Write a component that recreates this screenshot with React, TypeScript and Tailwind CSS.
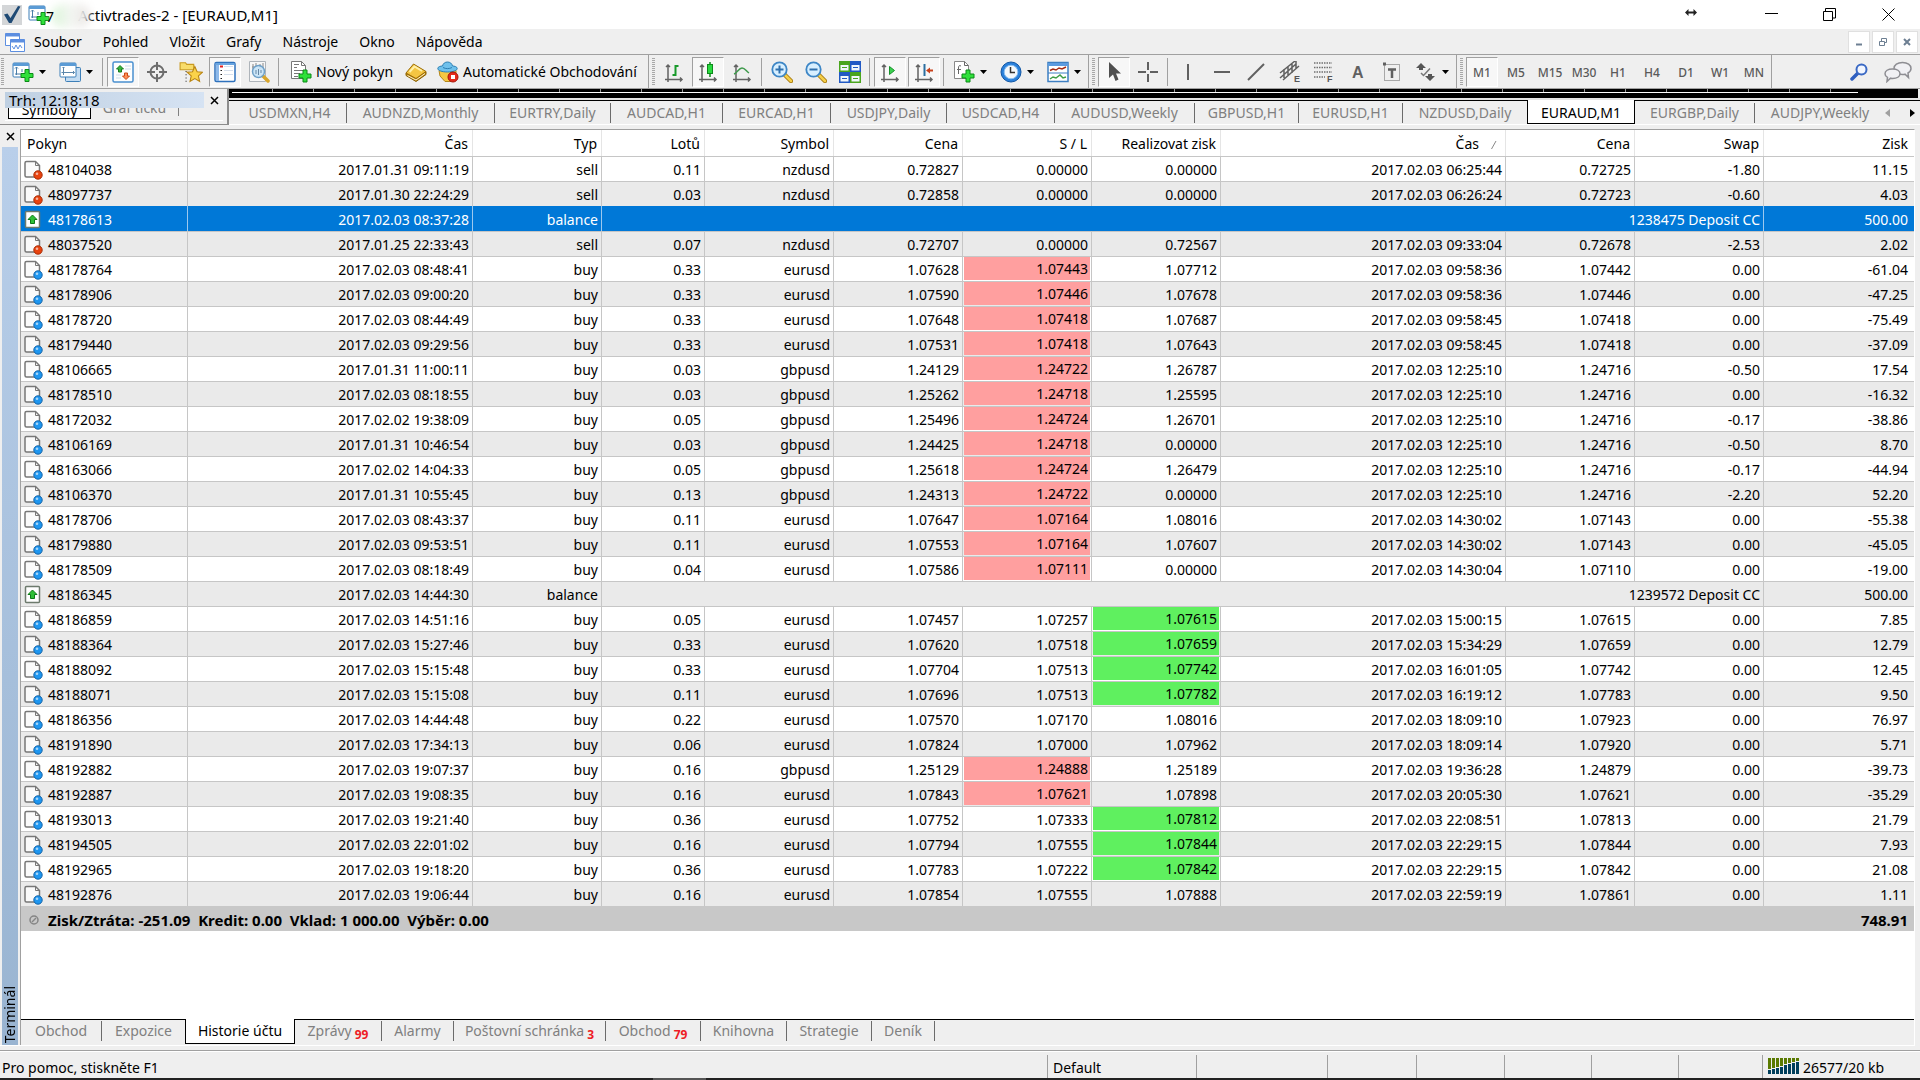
import { Fragment, type ReactNode } from 'react'

type Order = {
  id: string
  open: string
  type: 'buy' | 'sell'
  lots: string
  symbol: string
  price: string
  sl: string
  tp: string
  close: string
  closePrice: string
  swap: string
  profit: string
  hit?: 'sl' | 'tp'
}

type Balance = { id: string; open: string; type: 'balance'; comment: string; profit: string; selected?: boolean }

const order = (line: string, hit?: 'sl' | 'tp'): Order => {
  const [id, open, type, lots, symbol, price, sl, tp, close, closePrice, swap, profit] = line.split('|')
  return { id, open, type: type as 'buy' | 'sell', lots, symbol, price, sl, tp, close, closePrice, swap, profit, hit }
}

const rows: (Order | Balance)[] = [
  order('48104038|2017.01.31 09:11:19|sell|0.11|nzdusd|0.72827|0.00000|0.00000|2017.02.03 06:25:44|0.72725|-1.80|11.15'),
  order('48097737|2017.01.30 22:24:29|sell|0.03|nzdusd|0.72858|0.00000|0.00000|2017.02.03 06:26:24|0.72723|-0.60|4.03'),
  { id: '48178613', open: '2017.02.03 08:37:28', type: 'balance', comment: '1238475 Deposit CC', profit: '500.00', selected: true },
  order('48037520|2017.01.25 22:33:43|sell|0.07|nzdusd|0.72707|0.00000|0.72567|2017.02.03 09:33:04|0.72678|-2.53|2.02'),
  order('48178764|2017.02.03 08:48:41|buy|0.33|eurusd|1.07628|1.07443|1.07712|2017.02.03 09:58:36|1.07442|0.00|-61.04', 'sl'),
  order('48178906|2017.02.03 09:00:20|buy|0.33|eurusd|1.07590|1.07446|1.07678|2017.02.03 09:58:36|1.07446|0.00|-47.25', 'sl'),
  order('48178720|2017.02.03 08:44:49|buy|0.33|eurusd|1.07648|1.07418|1.07687|2017.02.03 09:58:45|1.07418|0.00|-75.49', 'sl'),
  order('48179440|2017.02.03 09:29:56|buy|0.33|eurusd|1.07531|1.07418|1.07643|2017.02.03 09:58:45|1.07418|0.00|-37.09', 'sl'),
  order('48106665|2017.01.31 11:00:11|buy|0.03|gbpusd|1.24129|1.24722|1.26787|2017.02.03 12:25:10|1.24716|-0.50|17.54', 'sl'),
  order('48178510|2017.02.03 08:18:55|buy|0.03|gbpusd|1.25262|1.24718|1.25595|2017.02.03 12:25:10|1.24716|0.00|-16.32', 'sl'),
  order('48172032|2017.02.02 19:38:09|buy|0.05|gbpusd|1.25496|1.24724|1.26701|2017.02.03 12:25:10|1.24716|-0.17|-38.86', 'sl'),
  order('48106169|2017.01.31 10:46:54|buy|0.03|gbpusd|1.24425|1.24718|0.00000|2017.02.03 12:25:10|1.24716|-0.50|8.70', 'sl'),
  order('48163066|2017.02.02 14:04:33|buy|0.05|gbpusd|1.25618|1.24724|1.26479|2017.02.03 12:25:10|1.24716|-0.17|-44.94', 'sl'),
  order('48106370|2017.01.31 10:55:45|buy|0.13|gbpusd|1.24313|1.24722|0.00000|2017.02.03 12:25:10|1.24716|-2.20|52.20', 'sl'),
  order('48178706|2017.02.03 08:43:37|buy|0.11|eurusd|1.07647|1.07164|1.08016|2017.02.03 14:30:02|1.07143|0.00|-55.38', 'sl'),
  order('48179880|2017.02.03 09:53:51|buy|0.11|eurusd|1.07553|1.07164|1.07607|2017.02.03 14:30:02|1.07143|0.00|-45.05', 'sl'),
  order('48178509|2017.02.03 08:18:49|buy|0.04|eurusd|1.07586|1.07111|0.00000|2017.02.03 14:30:04|1.07110|0.00|-19.00', 'sl'),
  { id: '48186345', open: '2017.02.03 14:44:30', type: 'balance', comment: '1239572 Deposit CC', profit: '500.00' },
  order('48186859|2017.02.03 14:51:16|buy|0.05|eurusd|1.07457|1.07257|1.07615|2017.02.03 15:00:15|1.07615|0.00|7.85', 'tp'),
  order('48188364|2017.02.03 15:27:46|buy|0.33|eurusd|1.07620|1.07518|1.07659|2017.02.03 15:34:29|1.07659|0.00|12.79', 'tp'),
  order('48188092|2017.02.03 15:15:48|buy|0.33|eurusd|1.07704|1.07513|1.07742|2017.02.03 16:01:05|1.07742|0.00|12.45', 'tp'),
  order('48188071|2017.02.03 15:15:08|buy|0.11|eurusd|1.07696|1.07513|1.07782|2017.02.03 16:19:12|1.07783|0.00|9.50', 'tp'),
  order('48186356|2017.02.03 14:44:48|buy|0.22|eurusd|1.07570|1.07170|1.08016|2017.02.03 18:09:10|1.07923|0.00|76.97'),
  order('48191890|2017.02.03 17:34:13|buy|0.06|eurusd|1.07824|1.07000|1.07962|2017.02.03 18:09:14|1.07920|0.00|5.71'),
  order('48192882|2017.02.03 19:07:37|buy|0.16|gbpusd|1.25129|1.24888|1.25189|2017.02.03 19:36:28|1.24879|0.00|-39.73', 'sl'),
  order('48192887|2017.02.03 19:08:35|buy|0.16|eurusd|1.07843|1.07621|1.07898|2017.02.03 20:05:30|1.07621|0.00|-35.29', 'sl'),
  order('48193013|2017.02.03 19:21:40|buy|0.36|eurusd|1.07752|1.07333|1.07812|2017.02.03 22:08:51|1.07813|0.00|21.79', 'tp'),
  order('48194505|2017.02.03 22:01:02|buy|0.16|eurusd|1.07794|1.07555|1.07844|2017.02.03 22:29:15|1.07844|0.00|7.93', 'tp'),
  order('48192965|2017.02.03 19:18:20|buy|0.36|eurusd|1.07783|1.07222|1.07842|2017.02.03 22:29:15|1.07842|0.00|21.08', 'tp'),
  order('48192876|2017.02.03 19:06:44|buy|0.16|eurusd|1.07854|1.07555|1.07888|2017.02.03 22:59:19|1.07861|0.00|1.11'),
]

const columns = ['Pokyn', 'Čas', 'Typ', 'Lotů', 'Symbol', 'Cena', 'S / L', 'Realizovat zisk', 'Čas', 'Cena', 'Swap', 'Zisk']

const menu = ['Soubor', 'Pohled', 'Vložit', 'Grafy', 'Nástroje', 'Okno', 'Nápověda']

const chartTabs = [
  { name: 'USDMXN,H4', width: 'w-[118px] pl-1' },
  { name: 'AUDNZD,Monthly', width: 'w-[148px]' },
  { name: 'EURTRY,Daily', width: 'w-[116px]' },
  { name: 'AUDCAD,H1', width: 'w-[112px]' },
  { name: 'EURCAD,H1', width: 'w-[108px]' },
  { name: 'USDJPY,Daily', width: 'w-[116px]' },
  { name: 'USDCAD,H4', width: 'w-[108px]' },
  { name: 'AUDUSD,Weekly', width: 'w-[140px]' },
  { name: 'GBPUSD,H1', width: 'w-[104px]' },
  { name: 'EURUSD,H1', width: 'w-[104px]' },
  { name: 'NZDUSD,Daily', width: 'w-[124px]' },
  { name: 'EURAUD,M1', width: 'w-[108px]', active: true },
  { name: 'EURGBP,Daily', width: 'w-[120px]' },
  { name: 'AUDJPY,Weekly', width: 'w-[130px]', last: true },
]

const terminalTabs = [
  { name: 'Obchod', width: 'w-[81px]' },
  { name: 'Expozice', width: 'w-[83px]', last: true },
  { name: 'Historie účtu', width: 'w-[110px]', active: true },
  { name: 'Zprávy', width: 'w-[87px]', count: 99 },
  { name: 'Alarmy', width: 'w-[72px]' },
  { name: 'Poštovní schránka', width: 'w-[152px]', count: 3 },
  { name: 'Obchod', width: 'w-[95px]', count: 79 },
  { name: 'Knihovna', width: 'w-[86px]' },
  { name: 'Strategie', width: 'w-[85px]' },
  { name: 'Deník', width: 'w-[63px]' },
]

const timeframes = ['M1', 'M5', 'M15', 'M30', 'H1', 'H4', 'D1', 'W1', 'MN']

function Icon({ children, size = 22 }: { children: ReactNode; size?: number }) {
  return (
    <svg width={size} height={size} viewBox="0 0 22 22" fill="none" className="shrink-0">
      {children}
    </svg>
  )
}

const Plus = ({ x, y }: { x: number; y: number }) => (
  <path
    transform={`translate(${x} ${y})`}
    d="M4.5.5h4v4h4v4h-4v4h-4v-4h-4v-4h4z"
    fill="#2fe03a"
    stroke="#0b8a17"
  />
)

const NewChart = () => (
  <Icon>
    <rect x="1" y="2" width="16" height="14" rx="1" fill="#fff" stroke="#3d7fb8" />
    <path d="M1 3.500h16" stroke="#5b9bd5" strokeWidth="3" />
    <path d="M4.500 6v8M3 7.500l1.500-1.500L6 7.500M3 13h9M10 8v3" stroke="#4b7ea8" />
    <Plus x={8.5} y={8} />
  </Icon>
)

const Profiles = () => (
  <Icon>
    <rect x="6.500" y="6.500" width="15" height="14" rx="1" fill="#c3dcf2" stroke="#3d7fb8" />
    <rect x="1" y="2" width="16" height="14" rx="1" fill="#fff" stroke="#3d7fb8" />
    <path d="M1 3.500h16" stroke="#5b9bd5" strokeWidth="3" />
    <path d="M4.500 6v8M3.500 7l1-1 1 1M2.500 11.500h13M14 10l1.500 1.500L14 13" stroke="#5c87ab" />
  </Icon>
)

const MarketWatch = () => (
  <Icon>
    <rect x="1" y="1" width="20" height="20" rx="1.500" fill="#fdfefe" stroke="#4a90d0" strokeWidth="1.500" />
    <path d="M4 14h5M4 17h5M13 5h6M13 8h6" stroke="#cddcea" />
    <path d="M8 4.500l3.500 3.500h-2v3h-3V8h-2z" fill="#35b63c" stroke="#177a1e" />
    <path d="M14 18.500l-3.500-3.500h2v-3h3v3h2z" fill="#ff8d55" stroke="#cc4a16" />
  </Icon>
)

const Target = () => (
  <Icon>
    <circle cx="11" cy="11" r="6.500" stroke="#6d6d6d" strokeWidth="2" />
    <path d="M11 1v8M11 13v8M1 11h8M13 11h8" stroke="#6d6d6d" strokeWidth="2" />
  </Icon>
)

const Favorites = () => (
  <Icon size={24}>
    <path d="M1 9V2.500h5l1 1.500h6.500V9z" fill="#f8dc6a" stroke="#c99a20" />
    <path d="M6.500 10v10" stroke="#333" strokeDasharray="1 2" />
    <path
      d="M14.500 6l2.100 4.700 5 .5-3.800 3.400 1.100 5-4.400-2.600-4.400 2.600 1.100-5-3.800-3.400 5-.5z"
      fill="#fbd34a"
      stroke="#b98514"
    />
  </Icon>
)

const Navigator = () => (
  <Icon>
    <rect x="1" y="1.500" width="20" height="19" rx="1.500" fill="#fff" stroke="#2f72bd" strokeWidth="1.500" />
    <path d="M1.500 3h19" stroke="#69a5e0" strokeWidth="2" />
    <rect x="2" y="4" width="3" height="16" fill="#8db9ea" />
    <path d="M6 5.500h3" stroke="#e02020" strokeWidth="2" />
    <path d="M6.500 9.500h1.500M6.500 13.500h1.500M6.500 17.500h1.500" stroke="#222" />
    <path d="M10 5.500h9M10 9.500h9M10 13.500h9" stroke="#d5dfec" />
  </Icon>
)

const Tester = () => (
  <Icon>
    <path d="M1.500.500h16v20h-16z" fill="#f7f7f7" stroke="#aeb4ba" />
    <path d="M5 3v5M8 2v4M12 3v5M15 2v5M4 6h2M11 5h2" stroke="#888" />
    <path d="M15 15l5 5" stroke="#d9a62c" strokeWidth="3.500" strokeLinecap="round" />
    <circle cx="10.500" cy="10.500" r="6" fill="#c7e3f7" fillOpacity=".9" stroke="#6ea0c8" strokeWidth="1.500" />
    <path d="M8 13V9M10.500 14V8M13 12v-3" stroke="#6687a5" />
  </Icon>
)

const NewOrder = () => (
  <Icon>
    <path d="M1.500.500h10l4 4v13h-14z" fill="#fff" stroke="#777" />
    <path d="M11.500.500v4h4M4 3.500h5M4 6.500h3M4 9.500h9M4 12.500h6M4 15.500h4" stroke="#777" />
    <Plus x={8.5} y={8.5} />
  </Icon>
)

const Book = () => (
  <Icon>
    <path d="M1 12v2.500l10 6 10-7v-3L11 17z" fill="#b98510" stroke="#8a6000" />
    <path d="M1 12L8.500 3 21 10.500 11 17.500z" fill="#f4c542" stroke="#9b6c06" />
    <path d="M4.500 11l5-5.500 7.500 4.500" stroke="#fff0a8" strokeWidth="2" />
    <path d="M2.500 14.500l8.500 4.500 9-6.500" stroke="#fff3cf" />
  </Icon>
)

const AutoTrade = () => (
  <Icon>
    <path d="M2 9.500h17v4.500l-5 6.500H8L3 15z" fill="#f5c842" stroke="#b4861a" />
    <path d="M.8 7.500C.8 5.500 4 5 5.500 5 6 2.500 8 1 10.500 1s4.500 1.500 5 4c1.500 0 4.700.5 4.700 2.500S16 11 10.500 11 .8 9.500.8 7.500z" fill="#6fc1ec" stroke="#2d7fb3" />
    <path d="M6 6.500c3 1.500 6 1.500 9 0" stroke="#2d7fb3" />
    <circle cx="16" cy="16" r="5" fill="#e42a1b" stroke="#a71308" />
    <rect x="14" y="14" width="4" height="4" fill="#fff" />
  </Icon>
)

const Axes = ({ children }: { children: ReactNode }) => (
  <Icon>
    <path d="M5 21V4M3 6l2-2 2 2M2 18.500h17M17 16.500l2 2-2 2" stroke="#636363" strokeWidth="1.500" />
    {children}
  </Icon>
)

const BarChart = () => (
  <Axes>
    <path d="M9.500 14h3M12.500 15V4M12.500 5h3" stroke="#189a2b" strokeWidth="2" />
  </Axes>
)

const CandleChart = () => (
  <Axes>
    <path d="M13 1v15" stroke="#0d8a1b" strokeWidth="1.500" />
    <rect x="10.500" y="3.500" width="5" height="9" fill="#2adb40" stroke="#0d8a1b" />
  </Axes>
)

const LineChart = () => (
  <Axes>
    <path d="M3 13c3-1 5-6 8-6s4 3 7 5" stroke="#3f9a4c" strokeWidth="1.500" />
  </Axes>
)

const AutoScroll = () => (
  <Axes>
    <path d="M10.500 5.500v8l5-4z" fill="#3bd04e" stroke="#15912a" />
  </Axes>
)

const ChartShift = () => (
  <Axes>
    <path d="M11.500 3v12" stroke="#2c6fa0" strokeWidth="2" />
    <path d="M13 9.500l4-3v2h3v2h-3v2z" fill="#c8401b" />
  </Axes>
)

const Zoom = ({ plus }: { plus?: boolean }) => (
  <Icon>
    <path d="M14 14l6 6" stroke="#a97c12" strokeWidth="4.500" strokeLinecap="round" />
    <path d="M14 14l6 6" stroke="#f5cf48" strokeWidth="2.500" strokeLinecap="round" />
    <circle cx="8.500" cy="8.500" r="7.200" fill="#d7efff" stroke="#3d86c6" strokeWidth="1.800" />
    <path d={plus ? 'M4.500 8.500h8M8.500 4.500v8' : 'M4.500 8.500h8'} stroke="#2f70ae" strokeWidth="2" />
  </Icon>
)

const Tiles = () => (
  <Icon>
    {[
      [0, 0, '#4aa51d'],
      [11, 0, '#2159c4'],
      [0, 11, '#2159c4'],
      [11, 11, '#4aa51d'],
    ].map(([x, y, color]) => (
      <g key={`${x}-${y}`} transform={`translate(${x} ${y})`}>
        <rect width="11" height="11" fill={color as string} />
        <rect x="1.500" y="4" width="8" height="5.500" fill="#f1f7fb" />
        <path d="M3 6.500h5" stroke={color as string} />
      </g>
    ))}
  </Icon>
)

const Indicators = () => (
  <Icon>
    <path d="M1.500.500h10l4 4v13h-14z" fill="#fff" stroke="#888" />
    <path d="M11.500.500v4h4M8 5c-2-1-2.500 0-2.500 2v6M4 8.500h4" stroke="#666" />
    <Plus x={8.5} y={8.5} />
  </Icon>
)

const Clock = () => (
  <Icon>
    <circle cx="11" cy="11" r="10" fill="#2a80da" stroke="#1257a5" />
    <circle cx="11" cy="11" r="6.800" fill="#f4f8fb" stroke="#8ec2f3" />
    <path d="M10.500 6v5.500H15" stroke="#333" strokeWidth="1.500" />
  </Icon>
)

const Template = () => (
  <Icon>
    <rect x="1" y="1.500" width="20" height="19" fill="#fff" stroke="#3d7fc2" strokeWidth="1.500" />
    <path d="M1 3.500h20" stroke="#5b9be0" strokeWidth="3" />
    <path d="M1 12h20" stroke="#3d7fc2" />
    <path d="M3 9.500l3-1.500 3 1 3-2 3 1 4-2" stroke="#a42a14" strokeWidth="1.500" />
    <path d="M3 18l3-2 3 1 4-3 3 3 3-1" stroke="#3e9c46" strokeWidth="1.500" />
  </Icon>
)

const Cursor = () => (
  <Icon>
    <path d="M6 1v16l4-3.500 2.500 6.500 3-1.500-2.500-6h5z" fill="#4f4f4f" />
  </Icon>
)

const Stroke = ({ d }: { d: string }) => (
  <Icon>
    <path d={d} stroke="#606060" strokeWidth="2" />
  </Icon>
)

const letter = 'font-bold font-["Liberation_Sans",sans-serif]'

const Channel = () => (
  <Icon>
    <path d="M1 17L17 3M4 19L20 5M1 12L16 0M5 8v9M9 5v9M13 3v9M17 0v8" stroke="#606060" strokeWidth="1.500" />
    <rect x="14" y="13" width="8" height="9" fill="#efefef" />
    <text x="15" y="21" fontSize="9" fill="#555" className={letter}>E</text>
  </Icon>
)

const Fibo = () => (
  <Icon>
    <path d="M1 2h18M1 6.500h18M1 11h18M1 16h11" stroke="#707070" strokeWidth="1.500" strokeDasharray="1.500 1" />
    <text x="14" y="21" fontSize="9" fill="#555" className={letter}>F</text>
  </Icon>
)

const LetterA = () => (
  <Icon>
    <text x="5" y="17" fontSize="16" fill="#606060" className={letter}>A</text>
  </Icon>
)

const Label = () => (
  <Icon>
    <rect x="3.500" y="3.500" width="15" height="16" stroke="#606060" strokeDasharray="1 1" />
    <path d="M2 3h3" stroke="#606060" strokeWidth="3" />
    <path d="M7 8.500h8M11 8v9" stroke="#606060" strokeWidth="2.500" />
  </Icon>
)

const Arrows = () => (
  <Icon>
    <path d="M6 2l5 5H8v2H4V7H1zM15 20l5-5h-3v-2h-4v2h-3z" fill="#555" />
    <path d="M6 12l2.500 2.500L15 7.500" stroke="#777" strokeWidth="1.500" />
  </Icon>
)

function Grip() {
  return <div className="mr-0.5 h-7 w-[3px] bg-[repeating-linear-gradient(#a8a8a8_0_1px,#efefef_1px_2px)]" />
}

function Separator() {
  return <div className="mr-[3px] ml-0.5 h-7 w-px bg-[#a0a0a0]" />
}

function ToolButton({ label, pressed, children }: { label: string; pressed?: boolean; children: ReactNode }) {
  return (
    <button
      type="button"
      aria-label={label}
      aria-pressed={pressed}
      className={`mx-px flex h-[30px] w-8 items-center justify-center border ${
        pressed ? 'border-t-[#a0a0a0] border-l-[#a0a0a0] border-r-white border-b-white bg-[#f7f7f7]' : 'border-transparent'
      }`}
    >
      {children}
    </button>
  )
}

function DropButton({ label, children }: { label: string; children: ReactNode }) {
  return (
    <button type="button" aria-label={label} className="flex h-[30px] w-[47px] items-center gap-[5px] pl-1.5">
      {children}
      <svg width="7" height="4" viewBox="0 0 7 4">
        <path d="M0 0h7L3.500 4z" fill="#000" />
      </svg>
    </button>
  )
}

function Group({ children, first }: { children: ReactNode; first?: boolean }) {
  return <div className={`flex h-full items-center border-r border-[#a0a0a0] ${first ? 'pl-px' : 'pl-[3px]'}`}>{children}</div>
}

function TitleBar() {
  return (
    <header className="flex h-[29px] items-center bg-white pl-0.5">
      <svg width="20" height="20" viewBox="0 0 20 20">
        <rect width="20" height="20" fill="#d4d6d8" />
        <path d="M2 9.500l3.500-1 3 4.500L16 1l2.500.5L9.500 18H7z" fill="#1f4a75" />
      </svg>
      <div className="relative ml-1.5 flex h-full items-center">
        <NewChart />
        <h1 className="pl-7 text-[15px] leading-5 whitespace-pre">Activtrades-2 - [EURAUD,M1]</h1>
        <span className="absolute top-1 left-6 h-6 w-[38px] rounded-full bg-linear-to-r from-[#d9f5d6] via-[#f4f6f3] to-[#e9e4e2] blur-xs" />
        <span className="absolute top-[7px] left-[18px] text-sm leading-5">7</span>
      </div>
      <svg width="12" height="7" viewBox="0 0 12 7" className="mr-[68px] mb-1 ml-auto">
        <path d="M0 3.500L3.500 0v2.500h5V0L12 3.500 8.500 7V4.500h-5V7z" fill="#222" />
      </svg>
      <button type="button" aria-label="Minimalizovat" className="flex h-full w-[58px] items-center pb-0.5">
        <svg width="13" height="13" viewBox="0 0 13 13">
          <path d="M0 6.500h13" stroke="#000" />
        </svg>
      </button>
      <button type="button" aria-label="Obnovit" className="flex h-full w-[59px] items-center">
        <svg width="13" height="13" viewBox="0 0 13 13" fill="none" stroke="#000">
          <path d="M.5 3.500h9v9h-9zM2.500 3.500v-3h10v9.500h-3" />
        </svg>
      </button>
      <button type="button" aria-label="Zavřít" className="flex h-full w-[38px] items-center">
        <svg width="13" height="13" viewBox="0 0 13 13" stroke="#000">
          <path d="M.5.5l12 12M12.500.5l-12 12" />
        </svg>
      </button>
    </header>
  )
}

function MenuBar() {
  return (
    <nav className="flex h-[25px] items-center pl-[5px]">
      <svg width="20" height="20" viewBox="0 0 20 20" fill="#fff" stroke="#5c8ee0">
        <path d="M.5 1.500h14v12H.5z" />
        <path d="M.5 3h14" strokeWidth="3" />
        <path d="M5.500 7.500h14v12h-14z" />
        <path d="M5.500 9h14" strokeWidth="3" />
        <path d="M7 14l2 3 2-4 2 4 2-4 2 3" fill="none" />
      </svg>
      <div className="flex gap-[21px] pl-[9px]">
        {menu.map((item) => (
          <button key={item} type="button" className="leading-5">
            {item}
          </button>
        ))}
      </div>
      <div className="mr-0.5 ml-auto flex gap-0.5">
        {['M3 8.500h6', 'M2.500 5.500h5v4h-5zM4.500 5V2.500h5v4H8', 'M3 3l6 6M9 3l-6 6'].map((d, i) => (
          <button
            key={d}
            type="button"
            aria-label={['Minimalizovat graf', 'Obnovit graf', 'Zavřít graf'][i]}
            className="flex size-[22px] items-center justify-center border border-[#e0e0e0] bg-white"
          >
            <svg width="12" height="12" viewBox="0 0 12 12" fill="none" stroke="#6d7f92" strokeWidth={i === 1 ? 1 : 2}>
              <path d={d} />
            </svg>
          </button>
        ))}
      </div>
    </nav>
  )
}

function Toolbar() {
  return (
    <div className="flex h-[35px] items-center border-y border-[#a0a0a0]">
      <Group first>
        <Grip />
        <DropButton label="Nový graf"><NewChart /></DropButton>
        <DropButton label="Profily"><Profiles /></DropButton>
        <Separator />
        <ToolButton label="Tržní hlídka" pressed><MarketWatch /></ToolButton>
        <ToolButton label="Datové okno"><Target /></ToolButton>
        <ToolButton label="Oblíbené"><Favorites /></ToolButton>
        <ToolButton label="Terminál" pressed><Navigator /></ToolButton>
        <ToolButton label="Tester strategií"><Tester /></ToolButton>
        <Separator />
        <button type="button" className="flex h-[30px] w-[117px] items-center gap-1 pl-2 whitespace-nowrap">
          <NewOrder />
          Nový pokyn
        </button>
        <ToolButton label="MetaEditor"><Book /></ToolButton>
        <button type="button" className="flex h-[30px] w-[215px] items-center gap-1 pl-1 whitespace-nowrap">
          <AutoTrade />
          Automatické Obchodování
        </button>
      </Group>
      <Group>
        <Grip />
        <ToolButton label="Sloupcový graf"><BarChart /></ToolButton>
        <ToolButton label="Svíčky" pressed><CandleChart /></ToolButton>
        <ToolButton label="Čárový graf"><LineChart /></ToolButton>
        <Separator />
        <ToolButton label="Přiblížit"><Zoom plus /></ToolButton>
        <ToolButton label="Oddálit"><Zoom /></ToolButton>
        <ToolButton label="Uspořádat okna"><Tiles /></ToolButton>
        <Separator />
        <ToolButton label="Automatický posun" pressed><AutoScroll /></ToolButton>
        <ToolButton label="Posun grafu" pressed><ChartShift /></ToolButton>
        <Separator />
        <DropButton label="Indikátory"><Indicators /></DropButton>
        <DropButton label="Periody"><Clock /></DropButton>
        <DropButton label="Šablony"><Template /></DropButton>
      </Group>
      <Group>
        <Grip />
        <ToolButton label="Kurzor" pressed><Cursor /></ToolButton>
        <ToolButton label="Nitkový kříž"><Stroke d="M11 1v8M11 13v8M1 11h8M13 11h8" /></ToolButton>
        <Separator />
        <ToolButton label="Svislá čára"><Stroke d="M11 3v16" /></ToolButton>
        <ToolButton label="Vodorovná čára"><Stroke d="M3 11h16" /></ToolButton>
        <ToolButton label="Trendová čára"><Stroke d="M3 19L19 3" /></ToolButton>
        <ToolButton label="Kanál"><Channel /></ToolButton>
        <ToolButton label="Fibonacci"><Fibo /></ToolButton>
        <ToolButton label="Text"><LetterA /></ToolButton>
        <ToolButton label="Popisek"><Label /></ToolButton>
        <DropButton label="Šipky"><Arrows /></DropButton>
      </Group>
      <Group>
        <Grip />
        {timeframes.map((tf) => (
          <ToolButton key={tf} label={tf} pressed={tf === 'M1'}>
            <span className="pt-0.5 text-xs font-medium text-[#5a5a5a]">{tf}</span>
          </ToolButton>
        ))}
      </Group>
      <div className="mr-2 ml-auto flex items-center gap-4">
        <button type="button" aria-label="Hledat">
          <svg width="18" height="18" viewBox="0 0 18 18" fill="none">
            <path d="M8 10l-6 6" stroke="#2f5fc0" strokeWidth="3.500" strokeLinecap="round" />
            <circle cx="11.500" cy="6.500" r="5" fill="#f2f6ff" stroke="#3a69c4" strokeWidth="2" />
          </svg>
        </button>
        <button type="button" aria-label="Zprávy komunity">
          <svg width="28" height="22" viewBox="0 0 28 22" fill="#f1f1f4" stroke="#8e8e93" strokeWidth="1.500">
            <path d="M18.500 1.500c-5 0-8.500 2.500-8.500 6s3.500 6 8.500 6c1 0 1.500 0 2.500-.3l3.500 3.300-.5-4.500c2-1.200 3-2.700 3-4.500 0-3.500-3.500-6-8.500-6z" />
            <path d="M8.500 8C4 8 1 10 1 12.700c0 1.500 1 2.800 2.500 3.600L3 20.500l3.500-3.300c.6.2 1.300.2 2 .2 4.500 0 7.500-2 7.500-4.700S13 8 8.500 8z" />
          </svg>
        </button>
      </div>
    </div>
  )
}

function MarketPanel() {
  return (
    <section className="flex w-[229px] shrink-0 flex-col border-r-2 border-b border-[#8c8c8c] pt-[3px] pl-[5px]">
      <div className="flex h-4 items-center">
        <h2 className="w-[199px] bg-linear-to-r from-[#bfd0e2] to-[#d6e3f3] pl-1 text-[15px] leading-4">Trh: 12:18:18</h2>
        <button type="button" aria-label="Zavřít Trh" className="pl-1.5">
          <CloseGlyph />
        </button>
      </div>
      <div className="mr-1 flex h-[13px] items-start overflow-hidden border-b border-white text-[#808080]">
        <button type="button" className="-mt-2 ml-[3px] h-[19px] w-[83px] border border-black bg-white leading-4 text-black">Symboly</button>
        <button type="button" className="-mt-2 w-[88px] border-r border-[#808080] leading-4">Graf ticků</button>
      </div>
    </section>
  )
}

function CloseGlyph() {
  return (
    <svg width="9" height="9" viewBox="0 0 9 9" stroke="#000" strokeWidth="1.500">
      <path d="M1 1l7 7M8 1L1 8" />
    </svg>
  )
}

function ChartTabs() {
  return (
    <div className="flex min-w-0 flex-1 flex-col">
      <div className="mr-0.5 h-[9px] bg-black">
        <div className="mr-[60px] ml-[3px] h-1 border-b border-white bg-[repeating-linear-gradient(to_right,#000_0_40px,#999_40px_41px)]" />
      </div>
      <div className="h-0.5 bg-[#e6e6e6]" />
      <div className="flex h-[25px] overflow-hidden border-b border-white text-[#808080]">
        {chartTabs.map((tab) =>
          tab.active ? (
            <button key={tab.name} type="button" className={`${tab.width} h-6 shrink-0 border border-t-0 border-black bg-white pt-0.5 text-black`}>
              {tab.name}
            </button>
          ) : (
            <div key={tab.name} className={`${tab.width} flex shrink-0 items-center border-t border-black`}>
              <button
                type="button"
                className={`h-5 w-full text-center leading-5 ${tab.last || tab.name === 'NZDUSD,Daily' ? '' : 'border-r border-[#6b6b6b]'}`}
              >
                {tab.name}
              </button>
            </div>
          ),
        )}
        <div className="flex flex-1 items-center justify-end gap-5 border-t border-black pr-3">
          <svg width="5" height="8" viewBox="0 0 5 8">
            <path d="M5 0v8L0 4z" fill="#a0a0a0" />
          </svg>
          <svg width="5" height="8" viewBox="0 0 5 8">
            <path d="M0 0v8l5-4z" fill="#000" />
          </svg>
        </div>
      </div>
    </div>
  )
}

function OrderIcon({ type }: { type: 'buy' | 'sell' | 'balance' }) {
  if (type === 'balance') {
    return (
      <svg width="20" height="20" viewBox="0 0 20 20" className="shrink-0">
        <rect x="1.500" y="1.500" width="14" height="16" rx="1" fill="#fff" stroke="#6d7a6d" strokeWidth="1.500" />
        <path d="M8.500 5l4.500 4.500h-2.500v4h-4v-4H4z" fill="#2fbf36" stroke="#0d7a17" />
      </svg>
    )
  }
  return (
    <svg width="20" height="20" viewBox="0 0 20 20" className="shrink-0">
      <path d="M1 3Q1 1.500 2.500 1.500h9l4 4V17h-13Q1 17 1 15.500z" fill="#fafafa" stroke="#777" strokeWidth="1.500" />
      <path d="M11.500 1.500v4h4" fill="none" stroke="#777" />
      <circle cx="14" cy="15" r="4.200" fill={type === 'buy' ? '#1e96f0' : '#e8430f'} stroke={type === 'buy' ? '#1263a8' : '#a92c05'} />
      <circle cx="13" cy="13.800" r="1.300" fill="#fff" fillOpacity=".6" />
    </svg>
  )
}

function HistoryTable() {
  return (
    <table className="w-full table-fixed border-separate border-spacing-0 text-right whitespace-nowrap">
      <colgroup>
        <col className="w-[167px]" />
        <col className="w-[285px]" />
        <col className="w-[129px]" />
        <col className="w-[103px]" />
        <col className="w-[129px]" />
        <col className="w-[129px]" />
        <col className="w-[129px]" />
        <col className="w-[129px]" />
        <col className="w-[285px]" />
        <col className="w-[129px]" />
        <col className="w-[129px]" />
        <col />
      </colgroup>
      <thead>
        <tr className="h-[26px]">
          {columns.map((name, i) => (
            <th
              key={i}
              scope="col"
              className={`border-[#e5e5e5] px-0 pt-0.5 pb-0 font-normal ${i === 0 ? 'border-r pl-1.5 text-left' : i === 11 ? 'pr-1.5' : 'border-r pr-1'}`}
            >
              {name}
              {i === 8 && (
                <svg width="6" height="8" viewBox="0 0 6 8" className="mr-1 ml-3 inline-block">
                  <path d="M.5 8L5 0" stroke="#888" />
                </svg>
              )}
            </th>
          ))}
        </tr>
      </thead>
      <tbody>
        {rows.map((row, i) => {
          const selected = row.type === 'balance' && row.selected
          const cell = selected
            ? 'border-r border-[#9cc8ef] pt-0.5 pr-[3px] pb-0 pl-0'
            : 'border-t border-r border-[#c6c6c6] pt-0.5 pr-[3px] pb-0 pl-0'
          const last = selected ? 'pt-0.5 pr-1.5 pb-0 pl-0' : 'border-t border-[#c6c6c6] pt-0.5 pr-1.5 pb-0 pl-0'
          return (
            <tr key={row.id} className={`h-[25px] ${selected ? 'bg-[#0078d7] text-white' : i % 2 ? 'bg-[#eaeaea]' : 'bg-white'}`}>
              <td className={cell}>
                <div className="flex items-center gap-1 pl-[3px]">
                  <OrderIcon type={row.type} />
                  {row.id}
                </div>
              </td>
              <td className={cell}>{row.open}</td>
              <td className={cell}>{row.type}</td>
              {row.type === 'balance' ? (
                <td className={cell} colSpan={8}>
                  {row.comment}
                </td>
              ) : (
                <Fragment>
                  <td className={cell}>{row.lots}</td>
                  <td className={cell}>{row.symbol}</td>
                  <td className={cell}>{row.price}</td>
                  {row.hit === 'sl' ? (
                    <td className="border-t border-r border-[#c6c6c6] px-px pt-0 pb-px">
                      <div className="h-[23px] bg-[#ff9f9f] pt-0.5 pr-0.5 leading-5">{row.sl}</div>
                    </td>
                  ) : (
                    <td className={cell}>{row.sl}</td>
                  )}
                  {row.hit === 'tp' ? (
                    <td className="border-t border-r border-[#c6c6c6] px-px pt-0 pb-px">
                      <div className="h-[23px] bg-[#5ff05f] pt-0.5 pr-0.5 leading-5">{row.tp}</div>
                    </td>
                  ) : (
                    <td className={cell}>{row.tp}</td>
                  )}
                  <td className={cell}>{row.close}</td>
                  <td className={cell}>{row.closePrice}</td>
                  <td className={cell}>{row.swap}</td>
                </Fragment>
              )}
              <td className={last}>{row.profit}</td>
            </tr>
          )
        })}
      </tbody>
      <tfoot>
        <tr className="h-[25px] bg-[#c8c8c8] text-[15px] font-bold">
          <td colSpan={11} className="px-0 pt-0.5 pb-0">
            <div className="flex items-center gap-[9px] pl-2 leading-5 whitespace-pre">
              <svg width="10" height="10" viewBox="0 0 10 10" fill="none" stroke="#858585" strokeWidth="1.500">
                <circle cx="5" cy="5" r="4" />
                <path d="M3 7l4-4" />
              </svg>
              {'Zisk/Ztráta: -251.09  Kredit: 0.00  Vklad: 1 000.00  Výběr: 0.00'}
            </div>
          </td>
          <td className="pt-0.5 pr-1.5 pb-0 pl-0">748.91</td>
        </tr>
      </tfoot>
    </table>
  )
}

function TerminalTabs() {
  return (
    <div className="flex h-[26px] text-[#808080]">
      {terminalTabs.map((tab, i) =>
        tab.active ? (
          <button key={i} type="button" className={`${tab.width} h-[25px] border border-t-0 border-black bg-white text-black`}>
            {tab.name}
          </button>
        ) : (
          <div key={i} className={`${tab.width} flex items-center border-t border-black pb-[3px]`}>
            <button
              type="button"
              className={`flex h-5 w-full justify-center gap-[3px] leading-5 whitespace-nowrap ${tab.last ? '' : 'border-r border-[#6b6b6b]'}`}
            >
              {tab.name}
              {tab.count && <span className="pt-1 text-xs leading-5 font-bold text-[#ee1c25]">{tab.count}</span>}
            </button>
          </div>
        ),
      )}
      <div className="flex-1 border-t border-black" />
    </div>
  )
}

function Terminal() {
  return (
    <main className="mt-1 mr-[5px] flex flex-1 border-b border-white">
      <aside className="flex w-5 shrink-0 flex-col items-center">
        <button type="button" aria-label="Zavřít Terminál" className="flex h-[18px] items-center pb-1">
          <CloseGlyph />
        </button>
        <div className="flex w-4 flex-1 items-end justify-center bg-linear-to-b from-[#b9cfea] to-[#99b4d1]">
          <span className="rotate-180 pt-0.5 leading-4 [writing-mode:vertical-rl]">Terminál</span>
        </div>
      </aside>
      <div className="flex min-w-0 flex-1 flex-col border-t border-r border-l border-t-[#a0a0a0] border-r-white border-l-[#a0a0a0]">
        <div className="flex-1 bg-white">
          <HistoryTable />
        </div>
        <TerminalTabs />
      </div>
    </main>
  )
}

function StatusBar() {
  const pane = 'h-[23px] border-l border-[#a0a0a0] pl-[5px]'
  return (
    <footer className="mt-1 border-t border-[#a0a0a0]">
      <div className="flex h-[27px] items-end border-t border-white leading-[26px]">
        <span className="h-[23px] flex-1 pl-0.5">Pro pomoc, stiskněte F1</span>
        <span className={`${pane} w-[149px]`}>Default</span>
        <span className={`${pane} w-[131px]`} />
        <span className={`${pane} w-[89px]`} />
        <span className={`${pane} w-[88px]`} />
        <span className={`${pane} w-[87px]`} />
        <span className={`${pane} w-[87px]`} />
        <span className={`${pane} w-[84px]`} />
        <span className={`${pane} flex w-[158px] items-start gap-1`}>
          <svg width="31" height="16" viewBox="0 0 31 16" className="mt-[3px]">
            {[12, 11, 10, 9, 7, 6, 5, 4].map((h, i) => (
              <g key={i}>
                <rect x={i * 4} y="0" width="3" height={h - 1} fill="#5a7a00" />
                <rect x={i * 4} y={h} width="3" height={16 - h} fill="#003f5c" />
              </g>
            ))}
          </svg>
          26577/20 kb
        </span>
      </div>
      <div className="h-0.5 bg-[#222]">
        <div className="ml-[34%] h-full w-[53px] bg-[#555]" />
      </div>
    </footer>
  )
}

export default function App() {
  return (
    <div className="flex min-h-screen flex-col bg-[#efefef] font-['Noto_Sans',sans-serif] text-sm leading-5 text-black">
      <TitleBar />
      <MenuBar />
      <Toolbar />
      <div className="flex h-9">
        <MarketPanel />
        <ChartTabs />
      </div>
      <Terminal />
      <StatusBar />
    </div>
  )
}
